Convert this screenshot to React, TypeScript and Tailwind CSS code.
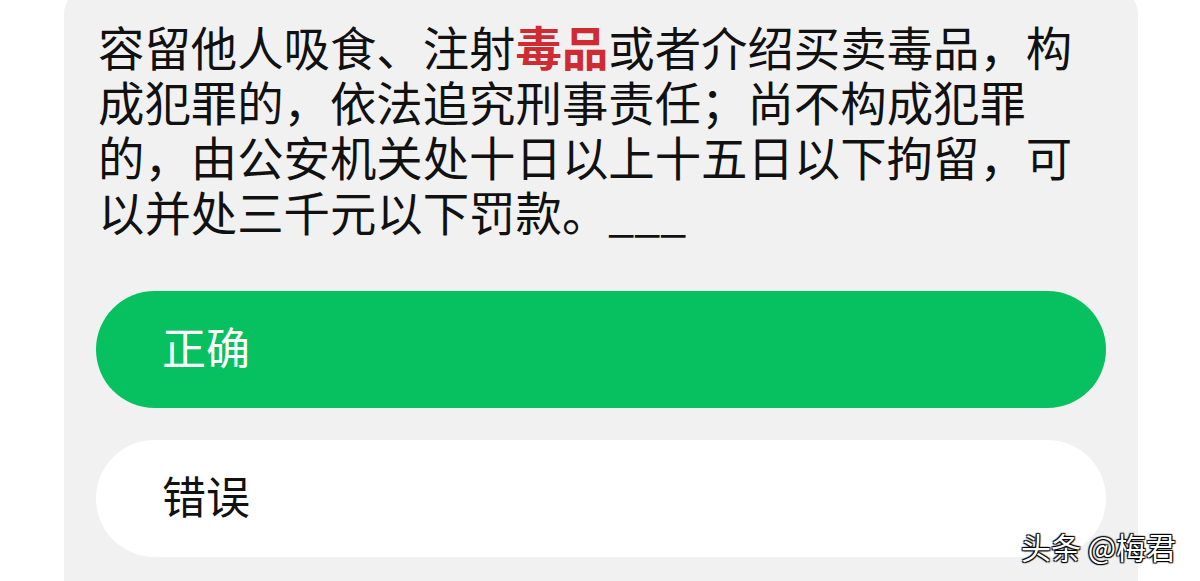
import React from "react";

export default function App() {
  const cjk = { fontFamily: '"Noto Sans CJK SC", "Noto Sans", sans-serif' };
  return (
    <div className="relative h-[581px] w-[1200px] overflow-hidden bg-white" style={cjk}>
      <div className="ml-[64px] -mt-[12px] h-[620px] w-[1074px] rounded-t-[26px] bg-[#f1f1f1] px-[32px] pt-[30px]">
        <p className="pl-[2px] text-[46.4px] leading-[55px] text-[#111111]">
          容留他人吸食、注射<span className="font-bold text-[#cf2b33]">毒品</span>或者介绍买卖毒品，构成犯罪的，依法追究刑事责任；尚不构成犯罪的，由公安机关处十日以上十五日以下拘留，可以并处三千元以下罚款。___
        </p>
        <div className="mt-[53px] flex flex-col gap-[32px]">
          <div className="flex h-[117px] items-center rounded-full bg-[#07c160] pb-[8px] pl-[66px] text-[44px] text-white">
            正确
          </div>
          <div className="flex h-[117px] items-center rounded-full bg-white pb-[8px] pl-[66px] text-[44px] text-[#111111]">
            错误
          </div>
        </div>
      </div>
      <div
        className="absolute left-[1021px] top-[526px] text-[30px] leading-[40px] text-white"
        style={{ textShadow: "1px 1px 1px #000, -1px -1px 1px #000, 1px -1px 1px #000, -1px 1px 1px #000" }}
      >
        头条 @梅君
      </div>
    </div>
  );
}
